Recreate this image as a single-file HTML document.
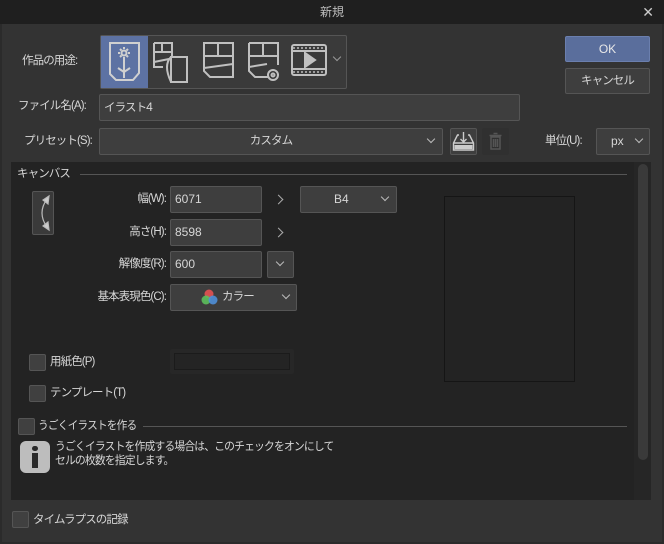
<!DOCTYPE html>
<html><head><meta charset="utf-8"><style>
*{box-sizing:border-box;margin:0;padding:0}
body{width:664px;height:544px;background:#2b2b2b;font-family:"Liberation Sans","Noto Sans CJK JP",sans-serif;font-size:11.5px;letter-spacing:-0.9px;color:#d6d6d6;position:relative;overflow:hidden}
.a{position:absolute}
.n{font-size:12px;letter-spacing:0}
.title{left:0;top:0;width:664px;height:24px;background:#1f1f1f;text-align:center;line-height:24px;color:#bdbdbd;font-size:12px;letter-spacing:0}
.dlg{left:2px;top:24px;width:660px;height:518px;background:#333}
.box{position:absolute;background:#3e3e3e;border:1px solid #555;border-radius:2px}
.lbl{position:absolute;white-space:nowrap;line-height:14px}
.r{text-align:right}
.chk{position:absolute;width:17px;height:17px;background:#404040;border:1px solid #555;border-radius:2px}
.v{position:absolute;width:7px;height:7px;border-right:1.2px solid #bbb;border-bottom:1.2px solid #bbb;transform:rotate(45deg)}
.gt{position:absolute;width:7px;height:7px;border-right:1.2px solid #aaa;border-top:1.2px solid #aaa;transform:rotate(45deg)}
</style></head><body>
<div class="a title">新規</div>
<div class="a" style="right:10px;top:4px;font-size:14px;color:#ccc;letter-spacing:0">✕</div>
<div class="a dlg"></div>

<div class="lbl" style="left:22px;top:54px">作品の用途:</div>
<div class="box" style="left:100px;top:35px;width:247px;height:54px;background:#3a3a3a"></div>
<div class="a" style="left:101px;top:36px;width:47px;height:52px;background:#5d72a3"></div>
<svg class="a" style="left:101px;top:36px" width="246" height="52" viewBox="0 0 246 52" fill="none" stroke="#c0c0c0" stroke-width="2">
<path d="M9 7h29v30l-6 7H15l-6-6z" stroke="#d0d0d0"/>
<circle cx="23" cy="17" r="2.5" stroke="#d0d0d0"/><path d="M23 11v2M23 21v2M17 17h2M27 17h2M19 13l1.5 1.5M25.5 19.5L27 21M27 13l-1.5 1.5M19 21l1.5-1.5M23 22v20M23 36l-6-4M23 36l6-4" stroke="#d0d0d0"/>
<path d="M53 7h18v14M53 7v24h9M53 16h18M61 7v9M53 26l15-3M70 21h16v25H70zM70 21q-8 8 0 25"/>
<path d="M103 7h29v34h-23l-6-6z M103 20h29M117 7v13M103 32l29-4"/>
<path d="M148 7h29v22M148 7v28l6 6h14M148 20h29M162 7v13M148 31l18-3"/>
<circle cx="172" cy="39" r="5"/><circle cx="172" cy="39" r="1.5"/>
<rect x="191" y="9" width="34" height="30" rx="2"/><path d="M191 15h34M191 33h34"/><path d="M192 12h32M192 36h32" stroke-dasharray="2 2" stroke-width="1.5"/><path d="M204 17l10 7-10 7z" fill="#c0c0c0"/>
</svg>
<div class="v" style="left:334px;top:54px;width:6px;height:6px;border-color:#999"></div>

<div class="a n" style="left:565px;top:36px;width:85px;height:26px;background:#5a6e9c;border:1px solid #6b7fae;border-radius:2px;text-align:center;line-height:24px;color:#e8e8e8">OK</div>
<div class="box" style="left:565px;top:68px;width:85px;height:26px;text-align:center;line-height:24px">キャンセル</div>

<div class="lbl" style="left:18px;top:99px">ファイル名(A):</div>
<div class="box" style="left:99px;top:94px;width:421px;height:27px;padding:5px 4px;line-height:14px">イラスト<span class="n">4</span></div>

<div class="lbl" style="left:24px;top:134px">プリセット(S):</div>
<div class="box" style="left:99px;top:128px;width:344px;height:27px;text-align:center;line-height:25px">カスタム</div>
<div class="v" style="left:428px;top:136px;width:6px;height:6px"></div>
<div class="box" style="left:450px;top:128px;width:27px;height:27px"></div>
<svg class="a" style="left:450px;top:128px" width="27" height="27" fill="none" stroke="#ccc" stroke-width="1.4"><path d="M9 7H7.5l-4 8v7h20v-7l-4-8H18M13.5 4v10M10.5 11l3 3 3-3M3.5 15h20"/><rect x="4.5" y="17" width="18" height="4" fill="#ccc" stroke="none"/></svg>
<div class="a" style="left:482px;top:128px;width:27px;height:27px;background:#303030;border-radius:2px"></div>
<svg class="a" style="left:482px;top:128px" width="27" height="27" fill="none" stroke="#555" stroke-width="1.5"><path d="M9 9h9v12H9zM7.5 7.5h12M11.5 5.5h4M11.5 11v8M13.5 11v8M15.5 11v8"/></svg>
<div class="lbl" style="left:545px;top:134px">単位(U):</div>
<div class="box n" style="left:596px;top:128px;width:54px;height:27px;padding-left:14px;line-height:25px">px</div>
<div class="v" style="left:636px;top:136px;width:6px;height:6px"></div>

<div class="a" style="left:11px;top:162px;width:623px;height:338px;background:#232323"></div>
<div class="a" style="left:634px;top:162px;width:17px;height:338px;background:#262626"></div>
<div class="a" style="left:638px;top:164px;width:10px;height:296px;background:#3a3a3a;border-radius:5px"></div>
<div class="lbl" style="left:17px;top:167px">キャンバス</div>
<div class="a" style="left:80px;top:174px;width:547px;height:1px;background:#555"></div>
<div class="box" style="left:32px;top:191px;width:22px;height:44px;background:#3a3a3a"></div>
<svg class="a" style="left:32px;top:191px" width="22" height="44" fill="none" stroke="#bbb" stroke-width="1.2"><path d="M15 8Q5 22 15 36"/><path d="M17 5l-1 8-5-4z M17 39l-1-8-5 4z" fill="#ccc"/></svg>

<div class="lbl r" style="left:60px;width:106px;top:192px">幅(W):</div>
<div class="box n" style="left:170px;top:186px;width:92px;height:27px;padding:5px 4px;line-height:14px">6071</div>
<div class="gt" style="left:275px;top:196px"></div>
<div class="box n" style="left:300px;top:186px;width:97px;height:27px;padding-left:33px;line-height:25px">B4</div>
<div class="v" style="left:382px;top:194px;width:6px;height:6px"></div>

<div class="lbl r" style="left:60px;width:106px;top:225px">高さ(H):</div>
<div class="box n" style="left:170px;top:219px;width:92px;height:27px;padding:5px 4px;line-height:14px">8598</div>
<div class="gt" style="left:275px;top:229px"></div>

<div class="lbl r" style="left:60px;width:106px;top:257px">解像度(R):</div>
<div class="box n" style="left:170px;top:251px;width:92px;height:27px;padding:5px 4px;line-height:14px">600</div>
<div class="box" style="left:267px;top:251px;width:27px;height:27px"></div>
<div class="v" style="left:277px;top:259px;width:6px;height:6px"></div>

<div class="lbl r" style="left:40px;width:126px;top:290px">基本表現色(C):</div>
<div class="box" style="left:170px;top:284px;width:127px;height:27px;padding-left:51px;line-height:25px">カラー</div>
<svg class="a" style="left:200px;top:288px" width="20" height="20"><circle cx="9" cy="6" r="4.5" fill="#d35050"/><circle cx="6" cy="12" r="4.5" fill="#5cbf5c" fill-opacity=".9"/><circle cx="13" cy="12" r="4.5" fill="#4f8fd8" fill-opacity=".9"/></svg>
<div class="v" style="left:283px;top:292px;width:6px;height:6px"></div>

<div class="a" style="left:444px;top:196px;width:131px;height:186px;border:1px solid #151515"></div>

<div class="chk" style="left:29px;top:354px"></div>
<div class="lbl" style="left:50px;top:355px">用紙色(P)</div>
<div class="a" style="left:170px;top:349px;width:124px;height:25px;background:#272727;border-radius:2px"><div class="a" style="left:4px;top:4px;width:116px;height:17px;border:1px solid #1b1b1b;background:#242424"></div></div>
<div class="chk" style="left:29px;top:385px"></div>
<div class="lbl" style="left:50px;top:386px">テンプレート(T)</div>

<div class="chk" style="left:18px;top:418px"></div>
<div class="lbl" style="left:38px;top:419px;transform:scaleX(0.93);transform-origin:left">うごくイラストを作る</div>
<div class="a" style="left:143px;top:426px;width:484px;height:1px;background:#555"></div>
<div class="a" style="left:20px;top:441px;width:30px;height:32px;background:#bdbdbd;border-radius:6px"></div>
<div class="a" style="left:32px;top:446px;width:6px;height:5px;background:#2a2a2a;border-radius:3px"></div>
<div class="a" style="left:32px;top:453px;width:6px;height:15px;background:#2a2a2a"></div>
<div class="lbl" style="left:55px;top:440px;line-height:14px;transform:scaleX(0.94);transform-origin:left">うごくイラストを作成する場合は、このチェックをオンにして<br>セルの枚数を指定します。</div>

<div class="chk" style="left:12px;top:511px"></div>
<div class="lbl" style="left:33px;top:513px">タイムラプスの記録</div>
</body></html>
